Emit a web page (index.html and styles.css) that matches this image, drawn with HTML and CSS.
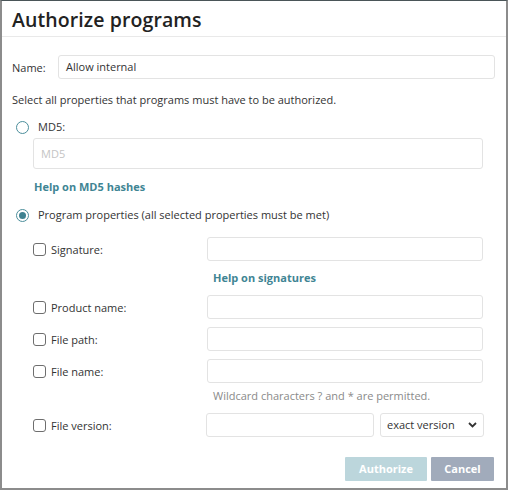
FILE: index.html
```html
<!DOCTYPE html>
<html>
<head>
<meta charset="utf-8">
<link rel="stylesheet" href="styles.css">
</head>
<body>
<div class="dialog">
  <div class="header">Authorize programs</div>
  <div class="content">
    <div class="name-row">
      <span class="name-label">Name:</span>
      <div class="input name-input">Allow internal</div>
    </div>
    <p class="intro">Select all properties that programs must have to be authorized.</p>

    <div class="radio-row md5-row">
      <span class="radio"></span>
      <span class="radio-label">MD5:</span>
    </div>
    <div class="indent">
      <div class="input md5-input placeholder">MD5</div>
      <div class="help md5-help">Help on MD5 hashes</div>
    </div>

    <div class="radio-row prog-row">
      <span class="radio checked"><span class="dot"></span></span>
      <span class="radio-label">Program properties (all selected properties must be met)</span>
    </div>

    <div class="props">
      <div class="prop">
        <label class="check"><span class="box"></span>Signature:</label>
        <div class="input field"></div>
      </div>
      <div class="help sub">Help on signatures</div>
      <div class="prop">
        <label class="check"><span class="box"></span>Product name:</label>
        <div class="input field"></div>
      </div>
      <div class="prop gap">
        <label class="check"><span class="box"></span>File path:</label>
        <div class="input field"></div>
      </div>
      <div class="prop gap">
        <label class="check"><span class="box"></span>File name:</label>
        <div class="input field"></div>
      </div>
      <div class="note">Wildcard characters ? and * are permitted.</div>
      <div class="prop version">
        <label class="check"><span class="box"></span>File version:</label>
        <div class="version-fields">
          <div class="input vfield"></div>
          <div class="input select">exact version
            <svg class="chev" width="9" height="6" viewBox="0 0 9 6"><path d="M1 1 L4.5 4.5 L8 1" fill="none" stroke="#333" stroke-width="1.8"/></svg>
          </div>
        </div>
      </div>
    </div>

    <div class="buttons">
      <div class="btn authorize">Authorize</div>
      <div class="btn cancel">Cancel</div>
    </div>
  </div>
</div>
</body>
</html>
```
FILE: styles.css
```css
html, body {
  margin: 0;
  padding: 0;
  background: #ffffff;
}
body {
  font-family: "Open Sans", "DejaVu Sans", sans-serif;
  font-size: 11px;
  color: #333333;
}
.dialog {
  width: 508px;
  height: 490px;
  box-sizing: border-box;
  border-left: 2px solid #8c8c8c;
  border-right: 2px solid #8c8c8c;
  border-bottom: 2px solid #8c8c8c;
  border-top: 1px solid #4a5558;
  background: #fff;
}
.header {
  height: 36px;
  box-sizing: border-box;
  padding: 5px 0 0 10px;
  font-size: 19.5px;
  font-weight: 600;
  color: #222;
  letter-spacing: 0.1px;
  border-bottom: 1px solid #e9e9e9;
}
.content {
  padding: 18px 10px 0 10px;
}
.input {
  box-sizing: border-box;
  border: 1px solid #e3e3e3;
  border-radius: 3px;
  background: #fff;
  height: 24px;
  line-height: 22px;
  padding: 0 7px;
}
.name-row {
  display: flex;
  align-items: center;
}
.name-label {
  width: 46px;
}
.name-input {
  flex: 0 0 437px;
}
.intro {
  margin: 10px 0 0 0;
  line-height: 22px;
}
.radio-row {
  display: flex;
  align-items: center;
  padding-left: 4px;
}
.md5-row {
  margin-top: 5px;
}
.radio {
  width: 11px;
  height: 11px;
  border: 1.5px solid #4b8e9b;
  border-radius: 50%;
  display: inline-flex;
  align-items: center;
  justify-content: center;
  margin-right: 9px;
}
.radio .dot {
  width: 7px;
  height: 7px;
  border-radius: 50%;
  background: #3f8291;
}
.radio-label {
  line-height: 22px;
}
.indent {
  padding-left: 21px;
}
.md5-input {
  width: 450px;
  height: 31px;
  line-height: 29px;
  margin-top: 0px;
}
.placeholder {
  color: #c4c4c4;
}
.help {
  color: #3f8594;
  font-weight: 700;
  line-height: 20px;
}
.md5-help {
  margin-top: 8px;
  padding-left: 1px;
}
.prog-row {
  margin-top: 7px;
}
.props {
  padding-left: 21px;
  margin-top: 11px;
}
.prop {
  display: flex;
  align-items: center;
  height: 24px;
}
.prop.gap {
  margin-top: 8px;
}
.check {
  width: 174px;
  display: flex;
  align-items: center;
}
.box {
  width: 11px;
  height: 11px;
  border: 1px solid #6e6e6e;
  border-radius: 3px;
  margin-right: 5px;
}
.field {
  width: 276px;
}
.help.sub {
  padding-left: 180px;
  margin-top: 7px;
  margin-bottom: 7px;
}
.note {
  padding-left: 180px;
  color: #8a8a8a;
  line-height: 20px;
  margin-top: 3px;
  margin-bottom: 7px;
}
.version .check {
  width: 173px;
}
.version-fields {
  display: flex;
  gap: 6px;
}
.vfield {
  width: 168px;
}
.select {
  width: 104px;
  display: flex;
  align-items: center;
  justify-content: space-between;
  padding: 0 6px 0 6px;
}
.chev {
  display: block;
}
.buttons {
  display: flex;
  justify-content: flex-end;
  gap: 4px;
  margin-top: 20px;
  padding-right: 2px;
}
.btn {
  height: 24px;
  line-height: 24px;
  color: #fff;
  font-weight: 700;
  text-align: center;
  border-radius: 1px;
}
.authorize {
  width: 82px;
  background: #bcd6dc;
}
.cancel {
  width: 63px;
  background: #a1abbb;
}
```
